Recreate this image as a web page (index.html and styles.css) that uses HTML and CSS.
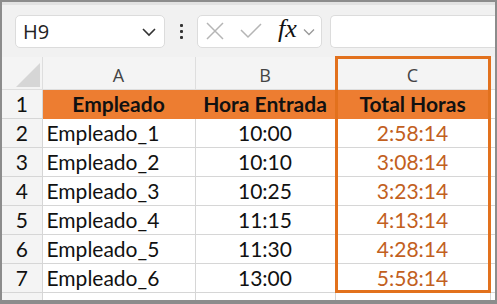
FILE: index.html
```html
<!DOCTYPE html>
<html lang="es">
<head>
<meta charset="utf-8">
<link rel="stylesheet" href="styles.css">
</head>
<body>
<div class="frame">
  <div class="toolbar">
    <div class="namebox">
      <span class="cellref">H9</span>
      <svg class="chev" width="16" height="10" viewBox="0 0 16 10"><path d="M2 2 L8 8 L14 2" fill="none" stroke="#333" stroke-width="1.6"/></svg>
    </div>
    <div class="dots"><i></i><i></i><i></i></div>
    <div class="fxbox">
      <svg class="ic" width="20" height="20" viewBox="0 0 20 20"><path d="M2 2 L18 18 M18 2 L2 18" stroke="#b5b5b5" stroke-width="1.5"/></svg>
      <svg class="ic" width="22" height="20" viewBox="0 0 22 20"><path d="M1 9 L8 16 L21 3" fill="none" stroke="#b5b5b5" stroke-width="1.5"/></svg>
      <span class="fx">fx</span>
      <svg class="chev2" width="12" height="8" viewBox="0 0 12 8"><path d="M1 1.5 L6 6.5 L11 1.5" fill="none" stroke="#999" stroke-width="1.3"/></svg>
    </div>
    <div class="input"></div>
  </div>
  <div class="sheet">
    <table class="grid">
      <colgroup>
        <col class="c0"><col class="ca"><col class="cb"><col class="cc"><col class="cd">
      </colgroup>
      <tr class="colhead">
        <th class="corner"><span class="tri"></span></th><th>A</th><th>B</th><th>C</th><th></th>
      </tr>
      <tr class="hdr">
        <td class="rn">1</td><td class="h">Empleado</td><td class="h">Hora Entrada</td><td class="h">Total Horas</td><td class="e"></td>
      </tr>
      <tr><td class="rn">2</td><td class="l">Empleado_1</td><td class="m">10:00</td><td class="t">2:58:14</td><td class="e"></td></tr>
      <tr><td class="rn">3</td><td class="l">Empleado_2</td><td class="m">10:10</td><td class="t">3:08:14</td><td class="e"></td></tr>
      <tr><td class="rn">4</td><td class="l">Empleado_3</td><td class="m">10:25</td><td class="t">3:23:14</td><td class="e"></td></tr>
      <tr><td class="rn">5</td><td class="l">Empleado_4</td><td class="m">11:15</td><td class="t">4:13:14</td><td class="e"></td></tr>
      <tr><td class="rn">6</td><td class="l">Empleado_5</td><td class="m">11:30</td><td class="t">4:28:14</td><td class="e"></td></tr>
      <tr><td class="rn">7</td><td class="l">Empleado_6</td><td class="m">13:00</td><td class="t">5:58:14</td><td class="e"></td></tr>
      <tr class="last"><td class="rn"></td><td></td><td></td><td></td><td class="e"></td></tr>
    </table>
    <div class="sel"></div>
  </div>
</div>
</body>
</html>
```
FILE: styles.css
```css
* { box-sizing: border-box; }
html, body { margin: 0; padding: 0; background: #fff; }
.frame {
  width: 497px; height: 304px;
  border: 2px solid #8c8c8c;
  border-bottom-width: 4px;
  overflow: hidden;
  background: #fff;
  font-family: "Open Sans", "Noto Sans", sans-serif;
}
.toolbar {
  height: 55px;
  background: #f1f1f1;
  display: flex;
  align-items: center;
  padding-left: 13px;
  border-top: 3px solid #e2e2e2;
}
.namebox {
  width: 150px; height: 33px;
  background: #fff;
  border: 1px solid #dcdcdc;
  border-radius: 5px;
  display: flex; align-items: center; justify-content: space-between;
  padding: 0 7px 0 7px;
}
.cellref { font-size: 20px; color: #222; }
.chev { margin-top: 2px; }
.dots {
  width: 32px; display: flex; flex-direction: column; align-items: center; gap: 3px;
}
.dots i { width: 3px; height: 3px; background: #333; border-radius: 1px; display: block; }
.fxbox {
  width: 125px; height: 33px;
  background: #fff;
  border: 1px solid #dcdcdc;
  border-radius: 5px;
  display: flex; align-items: center;
  padding-left: 7px;
}
.fxbox .ic { margin-right: 15px; }
.fxbox .ic + .ic { margin-right: 16px; }
.fx {
  font-family: "Liberation Serif", "DejaVu Serif", serif;
  font-style: italic; font-size: 26px; color: #111;
  margin-right: 6px; margin-top: -4px;
}
.chev2 { margin-top: 2px; }
.input {
  flex: 1; height: 33px; margin-left: 8px;
  background: #fff; border: 1px solid #dcdcdc; border-right: none;
  border-radius: 5px 0 0 5px;
}
.sheet { position: relative; }
.grid {
  border-collapse: collapse;
  table-layout: fixed;
  width: 493px;
}
.c0 { width: 40px; } .ca { width: 153px; } .cb { width: 140px; } .cc { width: 155px; } .cd { width: 5px; }
.grid td, .grid th {
  padding: 0; border: 1px solid #d6d6d6; white-space: nowrap; overflow: hidden;
}
.colhead th {
  height: 32px; background: #f4f4f4; font-weight: normal;
  font-family: "Open Sans", sans-serif; font-size: 18px; color: #444;
  border-top: none; border-color: #dedede;
  vertical-align: bottom; padding-bottom: 2px;
}
.colhead th:first-child { border-left: none; }
.corner { position: relative; }
.tri {
  position: absolute; right: 2px; bottom: 2px;
  width: 0; height: 0;
  border-left: 24px solid transparent;
  border-bottom: 24px solid #d6d6d6;
}
.grid tr:not(.colhead) td { height: 29px; font-family: "Lato", "Liberation Sans", sans-serif; font-size: 21px; color: #111; }
.grid td.rn {
  background: #f4f4f4; color: #555; text-align: center; border-left: none;
  font-family: "Lato", sans-serif; font-size: 21px;
}
.hdr td.h {
  background: #ed7d31; color: #fdf0dc; font-weight: bold; text-align: center;
  border-color: #ed7d31; font-size: 20px;
}
td.l { padding-left: 4px; }
td.m { text-align: center; }
td.t { text-align: center; color: #c2601e !important; }
td.e { border-right: none; }
.grid tr.last td { height: 12px; }
.sel {
  position: absolute; left: 333px; top: -1px;
  width: 156px; height: 237px;
  border: 3px solid #e2711d;
  pointer-events: none;
}
```
